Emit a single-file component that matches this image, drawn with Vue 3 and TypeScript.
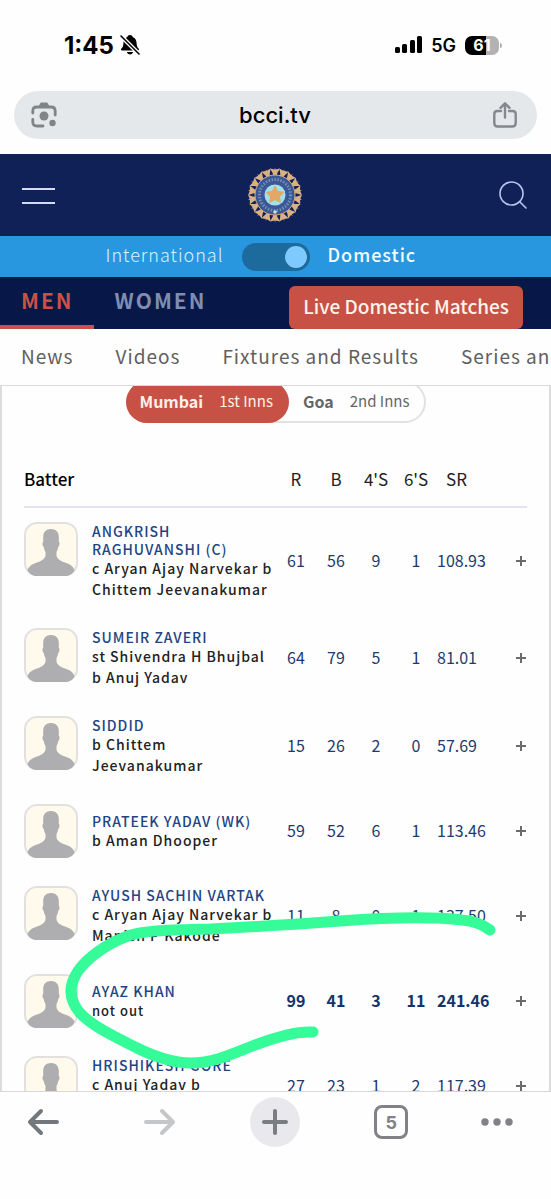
<script setup lang="ts">
import { ref } from 'vue'

interface Batter {
  name: string
  dismissal: string
  runs: number
  balls: number
  fours: number
  sixes: number
  rate: string
  notOut?: boolean
}

const batters: Batter[] = [
  { name: 'ANGKRISH RAGHUVANSHI (C)', dismissal: 'c Aryan Ajay Narvekar b Chittem Jeevanakumar', runs: 61, balls: 56, fours: 9, sixes: 1, rate: '108.93' },
  { name: 'SUMEIR ZAVERI', dismissal: 'st Shivendra H Bhujbal b Anuj Yadav', runs: 64, balls: 79, fours: 5, sixes: 1, rate: '81.01' },
  { name: 'SIDDID', dismissal: 'b Chittem Jeevanakumar', runs: 15, balls: 26, fours: 2, sixes: 0, rate: '57.69' },
  { name: 'PRATEEK YADAV (WK)', dismissal: 'b Aman Dhooper', runs: 59, balls: 52, fours: 6, sixes: 1, rate: '113.46' },
  { name: 'AYUSH SACHIN VARTAK', dismissal: 'c Aryan Ajay Narvekar b Manish P Kakode', runs: 11, balls: 8, fours: 0, sixes: 1, rate: '137.50' },
  { name: 'AYAZ KHAN', dismissal: 'not out', runs: 99, balls: 41, fours: 3, sixes: 11, rate: '241.46', notOut: true },
  { name: 'HRISHIKESH GORE', dismissal: 'c Anuj Yadav b', runs: 27, balls: 23, fours: 1, sixes: 2, rate: '117.39' },
]

const links = ['News', 'Videos', 'Fixtures and Results', 'Series and']
const domestic = ref(true)
const innings = ref(0)
const petals = Array.from({ length: 18 }, (_, i) => i * 20)
</script>

<template>
  <div class="phone">
    <div class="status">
      <div class="clock">
        <span>1:45</span>
        <svg width="22" height="22" viewBox="0 0 22 22" aria-hidden="true">
          <path d="M11 1c1.500 0 2.500.8 2.700 2 2.800 1 3.800 3.500 3.900 6.200.1 3 .8 4.300 2.200 5.600.5.600.2 1.700-.8 1.700H3c-1 0-1.300-1.100-.8-1.700 1.400-1.300 2.100-2.600 2.200-5.600C4.500 6.500 5.500 4 8.300 3 8.500 1.800 9.500 1 11 1zM7.800 18h6.400c-.5 1.600-1.700 2.400-3.200 2.400S8.300 19.600 7.800 18z" fill="#000" />
          <path d="M2 2l18 18" stroke="#fff" stroke-width="4" />
          <path d="M2 2l18 18" stroke="#000" stroke-width="1.600" stroke-linecap="round" />
        </svg>
      </div>
      <div class="signals">
        <svg width="28" height="18" viewBox="0 0 28 18" aria-hidden="true">
          <rect x="0" y="11" width="5" height="6" rx="1.500" />
          <rect x="7" y="8" width="5" height="9" rx="1.500" />
          <rect x="15" y="4" width="5" height="13" rx="1.500" />
          <rect x="22" y="0" width="5" height="17" rx="1.500" />
        </svg>
        <span class="network">5G</span>
        <span class="battery">61</span>
        <i class="battery-tip"></i>
      </div>
    </div>

    <div class="address">
      <button class="plain" aria-label="Search with camera">
        <svg width="26" height="26" viewBox="0 0 26 26" fill="none" stroke="#7f8487" stroke-width="2.800" stroke-linecap="round">
          <path d="M1.800 11V9c0-2.500 1.500-4 4-4h14.400c2.500 0 4 1.500 4 4v4M1.800 17.500v2.500c0 2.500 1.500 4 4 4H12" />
          <path d="M7.500 4.500l1.500-2.800c.3-.7.800-1.200 1.500-1.200h5c.7 0 1.200.5 1.500 1.200L18.500 4.500z" fill="#7f8487" stroke="none" />
          <circle cx="13" cy="14" r="4.500" fill="#7f8487" stroke="none" />
          <circle cx="21.500" cy="21" r="3.200" fill="#7f8487" stroke="none" />
        </svg>
      </button>
      <span class="host">bcci.tv</span>
      <button class="plain" aria-label="Share">
        <svg width="24" height="26" viewBox="0 0 24 26" fill="none" stroke="#85888c" stroke-width="2.400" stroke-linecap="round" stroke-linejoin="round">
          <path d="M8 9H4.500C2.500 9 1.300 10.200 1.300 12v9c0 2 1.200 3.500 3.500 3.500h14.400c2.300 0 3.500-1.500 3.500-3.500v-9c0-1.800-1.200-3-3.200-3H16" />
          <path d="M12 15.500V1.500M7.500 5.800L12 1.300l4.500 4.500" />
        </svg>
      </button>
    </div>

    <header class="brand">
      <button class="plain" aria-label="Menu">
        <svg width="34" height="20" viewBox="0 0 34 20" stroke="#d5dbef" stroke-width="2"><path d="M0 4h33M0 18h33" /></svg>
      </button>
      <svg class="crest" width="56" height="56" viewBox="-28 -28 56 56" role="img" aria-label="BCCI">
        <path v-for="a in petals" :key="a" :transform="`rotate(${a})`" d="M-1.500-19L-2.400-22-5-26.500-.5-25.600 0-27.500.5-25.600 5-26.500 2.400-22 1.500-19z" fill="#d8b184" />
        <circle r="20" fill="#3c5795" stroke="#d3ab7c" stroke-width="1" />
        <circle r="15.500" fill="none" stroke="#6f8fb5" stroke-width="3" stroke-dasharray="1.500 1.500" />
        <circle r="12" fill="#4157a5" />
        <circle r="10.500" fill="#9fe3e6" />
        <path d="M0-8.500l2.500 5 5.600.900-4 4 1 5.500L0 4.300l-5.100 2.600 1-5.500-4-4 5.600-.9z" fill="#e3a866" stroke="#e3a866" stroke-width="1.500" stroke-linejoin="round" />
        <circle cy="17" r="1.800" fill="#d9d7ef" />
      </svg>
      <button class="plain" aria-label="Search">
        <svg width="28" height="28" viewBox="0 0 28 28" fill="none" stroke="#b9c5ec" stroke-width="1.600" stroke-linecap="round"><circle cx="12.500" cy="12.500" r="11.500" /><path d="M20.500 20.500l6.500 6.500" /></svg>
      </button>
    </header>

    <div class="scope">
      <span class="scope-left">International</span>
      <label class="switch">
        <input v-model="domestic" type="checkbox" aria-label="Domestic" />
      </label>
      <span class="scope-right">Domestic</span>
    </div>

    <div class="tabs">
      <button class="tab active">MEN</button>
      <button class="tab">WOMEN</button>
      <button class="live">Live Domestic Matches</button>
    </div>

    <nav class="links">
      <a v-for="l in links" :key="l" href="#">{{ l }}</a>
    </nav>

    <main class="viewport">
      <div class="card">
        <div class="innings">
          <button :class="{ on: innings === 0 }" @click="innings = 0"><b>Mumbai</b><span>1st Inns</span></button>
          <button :class="{ on: innings === 1 }" @click="innings = 1"><b>Goa</b><span>2nd Inns</span></button>
        </div>
        <table>
          <thead>
            <tr>
              <th class="who" scope="col">Batter</th>
              <th class="num" scope="col">R</th>
              <th class="num" scope="col">B</th>
              <th class="num" scope="col">4'S</th>
              <th class="num" scope="col">6'S</th>
              <th class="rate" scope="col">SR</th>
              <td class="more"></td>
            </tr>
          </thead>
          <tbody>
            <tr v-for="b in batters" :key="b.name" :class="{ strong: b.notOut }">
              <td class="who">
                <div class="player">
                  <svg class="avatar" viewBox="0 0 54 54" aria-hidden="true">
                    <rect x="1" y="1" width="52" height="52" rx="12" fill="#fffaec" stroke="#e3e0e0" stroke-width="2" />
                    <path d="M27 7c5 0 7.800 3 7.800 8v5c1.200.5.900 4-.6 5-.4 2.500-1 3.500-1.700 5v3.500c.5 3.500 4 5.500 8.500 7 5.500 1.800 8.500 4.500 9.500 7.500-1.800 4-5.500 6-9.500 6H13c-4 0-7.700-2-9.500-6 1-3 4-5.700 9.500-7.500 4.500-1.500 8-3.500 8.500-7V30c-.7-1.500-1.300-2.500-1.700-5-1.500-1-1.800-4.500-.6-5v-5c0-5 2.800-8 7.800-8z" fill="#aeadaf" />
                  </svg>
                  <div>
                    <a class="name" href="#">{{ b.name }}</a>
                    <div class="out" :class="{ small: b.notOut }">{{ b.dismissal }}</div>
                  </div>
                </div>
              </td>
              <td class="num">{{ b.runs }}</td>
              <td class="num">{{ b.balls }}</td>
              <td class="num">{{ b.fours }}</td>
              <td class="num">{{ b.sixes }}</td>
              <td class="rate">{{ b.rate }}</td>
              <td class="more">
                <button class="plain" :aria-label="`More about ${b.name}`">
                  <svg width="12" height="12" viewBox="0 0 12 12" stroke="#6b6b6b" stroke-width="2"><path d="M6 1v10M1 6h10" /></svg>
                </button>
              </td>
            </tr>
          </tbody>
        </table>
      </div>
      <svg class="marker" width="551" height="705" viewBox="0 386 551 705" fill="none" stroke="#35fb98" stroke-width="11" stroke-linecap="round" stroke-linejoin="round" aria-hidden="true">
        <path d="M490 930C482 924 474 921 462 920C430 916 380 918 340 921C300 924 250 927 210 929C170 930 145 930 128 936C108 943 88 957 78 971C68 986 69 1000 80 1013C92 1026 115 1037 135 1047C155 1057 173 1063 191 1063C212 1063 230 1055 250 1047C275 1037 296 1031 313 1032" />
      </svg>
    </main>

    <footer class="toolbar">
      <button class="plain back" aria-label="Back">
        <svg width="32" height="28" viewBox="0 0 32 28" fill="none" stroke="#73787d" stroke-width="4" stroke-linecap="round" stroke-linejoin="round"><path d="M30 14H3M14 3L3 14l11 11" /></svg>
      </button>
      <button class="plain" aria-label="Forward">
        <svg width="32" height="28" viewBox="0 0 32 28" fill="none" stroke="#c5c6c7" stroke-width="4" stroke-linecap="round" stroke-linejoin="round"><path d="M2 14h27M18 3l11 11-11 11" /></svg>
      </button>
      <button class="plain round" aria-label="New tab">
        <svg width="28" height="28" viewBox="0 0 28 28" stroke="#7a7d81" stroke-width="4" stroke-linecap="round"><path d="M14 3v22M3 14h22" /></svg>
      </button>
      <button class="plain count" aria-label="Open tabs">5</button>
      <button class="plain menu" aria-label="More">
        <svg width="32" height="8" viewBox="0 0 32 8" fill="#808285"><circle cx="4" cy="4" r="3.700" /><circle cx="16" cy="4" r="3.700" /><circle cx="28" cy="4" r="3.700" /></svg>
      </button>
    </footer>
  </div>
</template>

<style>
body {
  margin: 0;
  background: #fefefe;
}
</style>

<style scoped>
.phone {
  display: flex;
  flex-direction: column;
  height: 100vh;
  overflow: hidden;
  background: #fefefe;
  font-family: "Noto Sans CJK SC", "Noto Sans", sans-serif;
}
.phone * {
  box-sizing: border-box;
}
button {
  font: inherit;
  border: 0;
  cursor: pointer;
}
svg {
  display: block;
  flex: none;
}
a {
  text-decoration: none;
}
.plain {
  display: flex;
  align-items: center;
  justify-content: center;
  padding: 0;
  background: none;
}
.status {
  flex: none;
  display: flex;
  justify-content: space-between;
  align-items: center;
  height: 91px;
  padding: 0 49px 1px 64px;
  font-family: Inter, sans-serif;
}
.clock,
.signals {
  display: flex;
  align-items: center;
}
.clock {
  gap: 5px;
  font-size: 24px;
  font-weight: 700;
}
.network {
  margin: 0 9px 0 8px;
  font-size: 18px;
  font-weight: 600;
}
.battery {
  width: 34px;
  border-radius: 7px;
  background: linear-gradient(90deg, #000 61%, #b2b2b2 61%);
  color: #fff;
  font-size: 16px;
  font-weight: 700;
  line-height: 19px;
  text-align: center;
}
.battery-tip {
  width: 2px;
  height: 5px;
  margin-left: 1px;
  border-radius: 0 2px 2px 0;
  background: #b2b2b2;
}
.address {
  flex: none;
  display: flex;
  justify-content: space-between;
  align-items: center;
  height: 48px;
  margin: 0 14px 15px;
  padding: 0 20px 0 17px;
  border-radius: 24px;
  background: #e5e8eb;
}
.host {
  font-family: Inter, sans-serif;
  font-size: 22px;
  font-weight: 500;
}
.brand {
  flex: none;
  display: grid;
  grid-template-columns: 1fr auto 1fr;
  align-items: center;
  height: 82px;
  padding: 0 24px 0 22px;
  background: #102158;
}
.brand .plain:first-child {
  justify-self: start;
}
.brand .plain:last-child {
  justify-self: end;
}
.scope {
  flex: none;
  display: grid;
  grid-template-columns: 1fr 68px 1fr;
  gap: 18px;
  align-items: center;
  height: 41px;
  background: #2997e0;
  color: #d9f4fd;
  font-size: 18px;
  line-height: 32px;
  letter-spacing: 1px;
}
.scope-left {
  text-align: right;
  font-weight: 300;
}
.scope-right {
  color: #f2fdff;
  font-weight: 500;
}
.scope span {
  padding-bottom: 6px;
}
.switch input {
  appearance: none;
  display: flex;
  justify-content: flex-end;
  width: 68px;
  height: 28px;
  margin: 0;
  padding: 3px;
  border-radius: 14px;
  background: #1d6a9c;
}
.switch input::before {
  content: "";
  width: 22px;
  height: 22px;
  border-radius: 50%;
  background: #7ecaff;
}
.switch input:not(:checked) {
  justify-content: flex-start;
}
.tabs {
  flex: none;
  display: flex;
  height: 52px;
  padding-right: 28px;
  background: #061748;
}
.tab {
  padding: 0 20px 2px 21px;
  border-bottom: 4px solid transparent;
  background: none;
  color: #7f8db2;
  font-size: 21px;
  font-weight: 700;
  line-height: 40px;
  letter-spacing: 2px;
}
.tab.active {
  border-color: #c85148;
  color: #c85148;
}
.live {
  align-self: flex-end;
  height: 43px;
  margin-left: auto;
  padding: 0 14px 4px;
  border-radius: 6px;
  background: #c65144;
  color: #fff3ea;
  font-size: 19px;
  font-weight: 500;
}
.links {
  flex: none;
  position: relative;
  display: flex;
  align-items: center;
  gap: 42px;
  height: 57px;
  padding: 0 0 3px 21px;
  overflow: hidden;
  border-bottom: 1px solid #dadada;
  white-space: nowrap;
}
.links a {
  color: #606060;
  font-size: 19px;
  letter-spacing: 1px;
}
.viewport {
  position: relative;
  flex: 1;
  min-height: 0;
  overflow: hidden;
}
.card {
  padding: 0 22px;
  border: solid #dcdcdc;
  border-width: 0 2px;
}
.innings {
  display: flex;
  width: 300px;
  height: 42px;
  margin: -5px auto 0;
  border: 2px solid #e2e2e2;
  border-radius: 21px;
}
.innings button {
  flex: none;
  display: flex;
  align-items: center;
  gap: 16px;
  margin: -2px 0 -2px -2px;
  padding: 0 16px 3px;
  border-radius: 21px;
  background: none;
  color: #666;
  font-size: 15px;
  white-space: nowrap;
}
.innings button.on {
  padding-left: 14px;
  background: #c65144;
  color: #fff0e8;
}
.innings b {
  font-size: 16px;
}
table {
  width: 100%;
  margin-top: 27px;
  border-collapse: collapse;
  table-layout: fixed;
}
th,
td {
  padding: 0;
}
th {
  height: 57px;
  font-size: 17px;
  font-weight: 400;
  color: #222;
}
thead tr {
  border-bottom: 2px solid #e4e4f0;
}
th.who {
  color: #000;
  font-weight: 500;
}
.who {
  width: 252px;
  text-align: left;
}
.num {
  width: 40px;
  text-align: center;
}
.rate {
  padding-left: 1px;
  text-align: left;
}
th.rate {
  padding-left: 10px;
}
.more {
  width: 12px;
}
tbody td {
  color: #1d3a6b;
  font-size: 16px;
}
tbody .num,
tbody .rate {
  padding-bottom: 2px;
}
tbody .who {
  padding: 14px 0;
}
.strong .num,
.strong .rate {
  color: #15326a;
  font-weight: 700;
}
.player {
  display: grid;
  grid-template-columns: 54px 1fr;
  gap: 14px;
  align-items: center;
}
tbody tr:last-child .player {
  align-items: start;
  min-height: 60px;
}
.avatar {
  align-self: start;
  width: 54px;
  height: 54px;
}
.name {
  display: block;
  color: #1e4484;
  font-size: 14px;
  font-weight: 500;
  line-height: 18px;
  letter-spacing: 1px;
}
.out {
  color: #222;
  font-size: 14px;
  font-weight: 500;
  line-height: 21px;
  letter-spacing: 1px;
}
.out.small {
  font-size: 13px;
}
tbody tr:last-child .out {
  white-space: nowrap;
}
.marker {
  position: absolute;
  top: 0;
  left: 0;
  pointer-events: none;
}
.toolbar {
  flex: none;
  display: grid;
  grid-template-columns: 102px repeat(3, 1fr) 102px;
  justify-items: center;
  align-items: center;
  height: 108px;
  padding: 0 0 47px;
  border-top: 1px solid #d8d8d8;
  background: #fefefe;
}
.back {
  margin-right: 16px;
}
.menu {
  margin-right: 6px;
}
.round {
  width: 50px;
  height: 50px;
  border-radius: 50%;
  background: #e9e9ed;
}
.count {
  width: 34px;
  height: 34px;
  border: 3px solid #808285;
  border-radius: 8px;
  color: #808285;
  font-family: Inter, sans-serif;
  font-size: 18px;
  font-weight: 700;
}
</style>
